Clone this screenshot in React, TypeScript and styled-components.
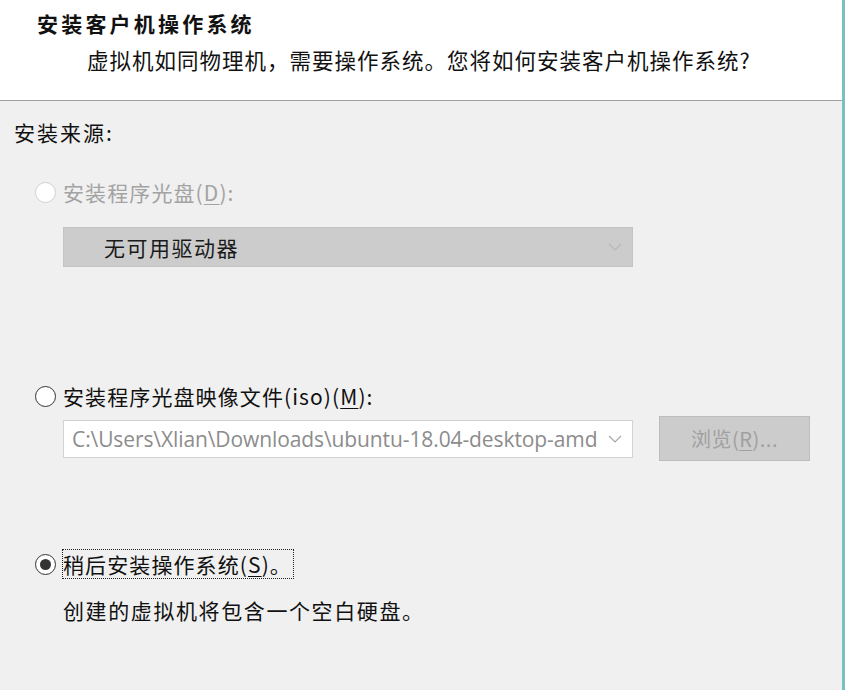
import React from "react";
import styled, { createGlobalStyle } from "styled-components";

const Global = createGlobalStyle`
  html, body { margin: 0; padding: 0; background: #f0f0f0; }
  body { font-family: "Noto Sans", "Noto Sans CJK SC", sans-serif; }
`;

const Window = styled.div`
  width: 845px;
  height: 690px;
  box-sizing: border-box;
  display: flex;
  flex-direction: column;
  background: #f0f0f0;
  border-right: 3px solid #79c0c2;
  overflow: hidden;
  font-family: "Noto Sans", "Noto Sans CJK SC", sans-serif;
  color: #111;
`;

const Header = styled.header`
  height: 101px;
  box-sizing: border-box;
  background: #ffffff;
  border-bottom: 1px solid #a0a0a0;
  padding: 8px 0 0 37px;
  display: flex;
  flex-direction: column;
  gap: 7px;
`;

const Title = styled.div`
  font-size: 21px;
  font-weight: 700;
  line-height: 30px;
  letter-spacing: 3.2px;
  font-family: "Noto Sans CJK SC", sans-serif;
`;

const Subtitle = styled.div`
  font-size: 21.5px;
  line-height: 30px;
  padding-left: 50px;
  font-family: "Noto Sans CJK SC", sans-serif;
  letter-spacing: 1px;
`;

const Body = styled.main`
  display: flex;
  flex-direction: column;
  padding: 16px 0 0 14px;
`;

const Label = styled.div`
  font-size: 21px;
  line-height: 30px;
  font-family: "Noto Sans CJK SC", sans-serif;
  letter-spacing: 2px;
`;

const RadioRow = styled.div<{ $top: number }>`
  display: flex;
  align-items: center;
  margin-top: ${(p) => p.$top}px;
  padding-left: 21px;
  height: 30px;
`;

const RadioCircle = styled.span<{ $disabled?: boolean; $checked?: boolean }>`
  width: 21px;
  height: 21px;
  box-sizing: border-box;
  border-radius: 50%;
  background: #ffffff;
  border: ${(p) => (p.$disabled ? "1.5px solid #cfcfcf" : "1.5px solid #333333")};
  display: flex;
  align-items: center;
  justify-content: center;
  margin-right: 6px;
  flex-shrink: 0;
  &::after {
    content: "";
    display: ${(p) => (p.$checked ? "block" : "none")};
    width: 11px;
    height: 11px;
    border-radius: 50%;
    background: #333333;
  }
`;

const RadioText = styled.span<{ $disabled?: boolean; $focused?: boolean }>`
  font-size: 21px;
  line-height: 30px;
  font-family: "Noto Sans CJK SC", sans-serif;
  color: ${(p) => (p.$disabled ? "#a3a3a3" : "#111")};
  outline: ${(p) => (p.$focused ? "1px dotted #222" : "none")};
  outline-offset: -1px;
  padding: 0 2px 0 1px;
  letter-spacing: 1.1px;
`;

const Key = styled.span`
  text-decoration: underline;
  text-underline-offset: 3px;
  text-decoration-thickness: 1px;
`;

const Indented = styled.div<{ $top: number }>`
  margin-left: 49px;
  margin-top: ${(p) => p.$top}px;
  display: flex;
  align-items: center;
  gap: 26px;
`;

const DisabledSelect = styled.div`
  width: 570px;
  height: 40px;
  box-sizing: border-box;
  background: #cccccc;
  border: 1px solid #c4c4c4;
  display: flex;
  align-items: center;
  justify-content: space-between;
  padding: 0 10px 0 40px;
  font-size: 21px;
  font-family: "Noto Sans CJK SC", sans-serif;
  color: #1a1a1a;
  letter-spacing: 1.5px;
`;

const Combo = styled.div`
  width: 570px;
  height: 38px;
  box-sizing: border-box;
  background: #ffffff;
  border: 1px solid #d3d3d3;
  display: flex;
  align-items: center;
  justify-content: space-between;
  padding: 0 10px 0 8px;
`;

const ComboText = styled.span`
  font-family: "Open Sans", "Noto Sans", sans-serif;
  font-size: 21px;
  color: #8c8c8c;
  white-space: nowrap;
  letter-spacing: -0.1px;
`;

const BrowseButton = styled.div`
  width: 151px;
  height: 45px;
  box-sizing: border-box;
  background: #cccccc;
  border: 1px solid #bdbdbd;
  display: flex;
  align-items: center;
  justify-content: center;
  font-size: 20px;
  font-family: "Noto Sans CJK SC", sans-serif;
  color: #a0a0a0;
  letter-spacing: 0.5px;
`;

const Description = styled.div`
  margin: 16px 0 0 49px;
  font-size: 21px;
  line-height: 30px;
  font-family: "Noto Sans CJK SC", sans-serif;
  letter-spacing: 1.6px;
`;

const Chevron = ({ color }: { color: string }) => (
  <svg width="14" height="8" viewBox="0 0 14 8">
    <polyline points="1,1 7,7 13,1" fill="none" stroke={color} strokeWidth="1.2" />
  </svg>
);

export default function App() {
  return (
    <>
      <Global />
      <Window>
        <Header>
          <Title>安装客户机操作系统</Title>
          <Subtitle>虚拟机如同物理机，需要操作系统。您将如何安装客户机操作系统?</Subtitle>
        </Header>
        <Body>
          <Label>安装来源:</Label>
          <RadioRow $top={30}>
            <RadioCircle $disabled />
            <RadioText $disabled>
              安装程序光盘(<Key>D</Key>):
            </RadioText>
          </RadioRow>
          <Indented $top={20}>
            <DisabledSelect>
              <span>无可用驱动器</span>
              <Chevron color="#b8b8b8" />
            </DisabledSelect>
          </Indented>
          <RadioRow $top={114}>
            <RadioCircle />
            <RadioText>
              安装程序光盘映像文件(iso)(<Key>M</Key>):
            </RadioText>
          </RadioRow>
          <Indented $top={5}>
            <Combo>
              <ComboText>C:\Users\Xlian\Downloads\ubuntu-18.04-desktop-amd</ComboText>
              <Chevron color="#a8a8a8" />
            </Combo>
            <BrowseButton>
              浏览(<Key>R</Key>)...
            </BrowseButton>
          </Indented>
          <RadioRow $top={88}>
            <RadioCircle $checked />
            <RadioText $focused>
              稍后安装操作系统(<Key>S</Key>)。
            </RadioText>
          </RadioRow>
          <Description>创建的虚拟机将包含一个空白硬盘。</Description>
        </Body>
      </Window>
    </>
  );
}
